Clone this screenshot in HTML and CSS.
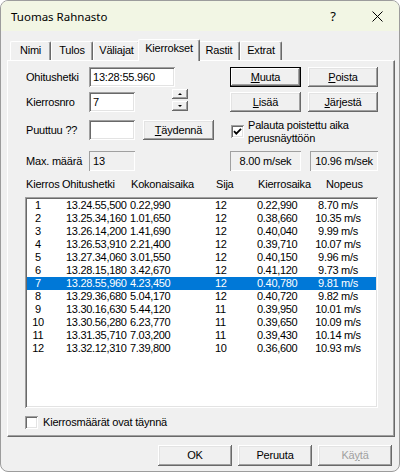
FILE: index.html
```html
<!DOCTYPE html>
<html>
<head>
<meta charset="utf-8">
<link rel="stylesheet" href="styles.css">
</head>
<body>
<div class="window">
  <div class="titlebar">
    <span class="title">Tuomas Rahnasto</span>
    <span class="cap help">?</span>
    <span class="cap close"><svg width="11" height="11" viewBox="0 0 11 11"><path d="M0.5 0.5 L10.5 10.5 M10.5 0.5 L0.5 10.5" stroke="#000" stroke-width="1" fill="none"/></svg></span>
  </div>
  <div class="tabs">
    <div class="tab t-nimi">Nimi</div>
    <div class="tab t-tulos">Tulos</div>
    <div class="tab t-vali">Väliajat</div>
    <div class="tab t-kier sel">Kierrokset</div>
    <div class="tab t-rast">Rastit</div>
    <div class="tab t-extr">Extrat</div>
  </div>
  <div class="panel">
    <div class="row r1">
      <span class="lbl">Ohitushetki</span>
      <div class="cell"><div class="edit w86">13:28:55.960</div></div>
      <div class="cell right"><div class="btn default w71"><u>M</u>uuta</div><div class="btn w70"><u>P</u>oista</div></div>
    </div>
    <div class="row r2">
      <span class="lbl">Kierrosnro</span>
      <div class="cell">
        <div class="edit w46">7</div>
        <div class="spin">
          <div class="sbtn"><span class="arr up"></span></div>
          <div class="sbtn"><span class="arr down"></span></div>
        </div>
      </div>
      <div class="cell right"><div class="btn w71"><u>L</u>isää</div><div class="btn w70"><u>J</u>ärjestä</div></div>
    </div>
    <div class="row r3">
      <span class="lbl">Puuttuu ??</span>
      <div class="cell"><div class="edit w46"></div><div class="btn w71 tayd"><u>T</u>äydennä</div></div>
      <div class="cell right">
        <div class="chkwrap">
          <span class="chk"><svg width="9" height="9" viewBox="0 0 9 9"><path d="M1 4.2 L3.3 6.6 L8 1.8" stroke="#000" stroke-width="1.8" fill="none"/></svg></span>
          <span class="chklbl">Palauta poistettu aika<br>perusnäyttöön</span>
        </div>
      </div>
    </div>
    <div class="row r4">
      <span class="lbl">Max. määrä</span>
      <div class="cell"><div class="static w46">13</div></div>
      <div class="cell right"><div class="static w71 center">8.00 m/sek</div><div class="static w68 center">10.96 m/sek</div></div>
    </div>
    <div class="colhead">
      <span>Kierros</span><span>Ohitushetki</span><span>Kokonaisaika</span><span>Sija</span><span>Kierrosaika</span><span>Nopeus</span>
    </div>
    <div class="list">
      <div class="lrow"><span class="c1">1</span><span class="c2">13.24.55,500</span><span>0.22,990</span><span>12</span><span>0.22,990</span><span class="c6">8.70 m/s</span></div>
      <div class="lrow"><span class="c1">2</span><span class="c2">13.25.34,160</span><span>1.01,650</span><span>12</span><span>0.38,660</span><span class="c6">10.35 m/s</span></div>
      <div class="lrow"><span class="c1">3</span><span class="c2">13.26.14,200</span><span>1.41,690</span><span>12</span><span>0.40,040</span><span class="c6">9.99 m/s</span></div>
      <div class="lrow"><span class="c1">4</span><span class="c2">13.26.53,910</span><span>2.21,400</span><span>12</span><span>0.39,710</span><span class="c6">10.07 m/s</span></div>
      <div class="lrow"><span class="c1">5</span><span class="c2">13.27.34,060</span><span>3.01,550</span><span>12</span><span>0.40,150</span><span class="c6">9.96 m/s</span></div>
      <div class="lrow"><span class="c1">6</span><span class="c2">13.28.15,180</span><span>3.42,670</span><span>12</span><span>0.41,120</span><span class="c6">9.73 m/s</span></div>
      <div class="lrow selrow"><span class="c1">7</span><span class="c2">13.28.55,960</span><span>4.23,450</span><span>12</span><span>0.40,780</span><span class="c6">9.81 m/s</span></div>
      <div class="lrow"><span class="c1">8</span><span class="c2">13.29.36,680</span><span>5.04,170</span><span>12</span><span>0.40,720</span><span class="c6">9.82 m/s</span></div>
      <div class="lrow"><span class="c1">9</span><span class="c2">13.30.16,630</span><span>5.44,120</span><span>11</span><span>0.39,950</span><span class="c6">10.01 m/s</span></div>
      <div class="lrow"><span class="c1">10</span><span class="c2">13.30.56,280</span><span>6.23,770</span><span>11</span><span>0.39,650</span><span class="c6">10.09 m/s</span></div>
      <div class="lrow"><span class="c1">11</span><span class="c2">13.31.35,710</span><span>7.03,200</span><span>11</span><span>0.39,430</span><span class="c6">10.14 m/s</span></div>
      <div class="lrow"><span class="c1">12</span><span class="c2">13.32.12,310</span><span>7.39,800</span><span>10</span><span>0.36,600</span><span class="c6">10.93 m/s</span></div>
    </div>
    <div class="bchk">
      <span class="chk"></span>
      <span>Kierrosmäärät ovat täynnä</span>
    </div>
  </div>
  <div class="footer">
    <div class="btn fbtn">OK</div>
    <div class="btn fbtn">Peruuta</div>
    <div class="btn fbtn disabled">Kä<u>y</u>tä</div>
  </div>
</div>
</body>
</html>
```
FILE: styles.css
```css
* { box-sizing: border-box; }
body {
  margin: 0;
  background: #fff;
  font-family: "Liberation Sans", Arial, sans-serif;
  font-size: 11px;
  letter-spacing: -0.2px;
  color: #000;
}
.window {
  width: 400px;
  height: 472px;
  border: 1px solid #9c9c9c;
  border-radius: 8px;
  background: #f0f0f0;
  overflow: hidden;
}
.titlebar {
  height: 30px;
  background: #f2f6e4;
  display: flex;
  align-items: center;
  padding-left: 10px;
  font-family: "Noto Sans", sans-serif;
  font-size: 11.5px;
  letter-spacing: 0;
}
.title { flex: 1; }
.cap {
  width: 44px;
  height: 30px;
  display: flex;
  align-items: center;
  justify-content: center;
}
.help { font-size: 13px; }
.tabs {
  display: flex;
  align-items: flex-end;
  height: 19px;
  margin-top: 10px;
  padding-left: 9px;
}
.tab {
  height: 19px;
  line-height: 17px;
  text-align: center;
  border-top: 1px solid #fff;
  border-left: 1px solid #fff;
  border-right: 1px solid #696969;
  box-shadow: inset -1px 0 #a0a0a0;
  border-radius: 2px 2px 0 0;
  background: #f0f0f0;
}
.t-nimi { width: 41px; }
.t-tulos { width: 42px; }
.t-vali { width: 47px; }
.t-kier { width: 62px; }
.t-rast { width: 42px; }
.t-extr { width: 42px; }
.tab.sel {
  height: 22px;
  margin: 0 -2px -1px;
  position: relative;
  z-index: 1;
}
.panel {
  margin-left: 6px;
  width: 388px;
  height: 377px;
  border-top: 1px solid #fff;
  border-left: 1px solid #fff;
  border-right: 1px solid #696969;
  border-bottom: 1px solid #696969;
  box-shadow: inset -1px -1px #a0a0a0;
  padding: 6px 0 0 17px;
}
.row {
  display: grid;
  grid-template-columns: 64px 141px 148px;
  height: 20px;
  align-items: center;
}
.r2 { margin-top: 5px; }
.r3 { margin-top: 8px; }
.r4 { margin-top: 11px; }
.lbl { padding-left: 1px; }
.cell {
  display: flex;
  align-items: center;
  height: 20px;
}
.right { gap: 7px; }
.r4 .right { gap: 9px; }
.edit {
  height: 20px;
  background: #fff;
  box-shadow: inset 1px 1px #a0a0a0, inset -1px -1px #fff, inset 2px 2px #696969, inset -2px -2px #e3e3e3;
  padding: 0 4px;
  line-height: 20px;
}
.static {
  height: 20px;
  line-height: 20px;
  padding: 0 4px;
  box-shadow: inset 1px 1px #a0a0a0, inset -1px -1px #fff;
}
.center { text-align: center; padding: 0; }
.w86 { width: 86px; }
.w46 { width: 46px; }
.w71 { width: 71px; }
.w70 { width: 70px; }
.w68 { width: 68px; }
.btn {
  height: 20px;
  line-height: 20px;
  text-align: center;
  background: #f0f0f0;
  box-shadow: inset -1px -1px #696969, inset 1px 1px #fff, inset -2px -2px #a0a0a0, inset 2px 2px #e3e3e3;
}
.btn.default {
  box-shadow: inset 0 0 0 1px #000, inset -2px -2px #696969, inset 2px 2px #fff, inset -3px -3px #a0a0a0;
}
.tayd { margin-left: 8px; }
.spin {
  margin-left: 37px;
  align-self: flex-start;
  margin-top: -3px;
  display: flex;
  flex-direction: column;
  gap: 2px;
}
.sbtn {
  width: 16px;
  height: 10px;
  display: flex;
  align-items: center;
  justify-content: center;
  background: #f0f0f0;
  box-shadow: inset -1px -1px #696969, inset 1px 1px #fff, inset -2px -2px #a0a0a0;
}
.arr {
  width: 0;
  height: 0;
  border-left: 2px solid transparent;
  border-right: 2px solid transparent;
}
.arr.up { border-bottom: 2px solid #000; }
.arr.down { border-top: 2px solid #000; }
.chkwrap {
  display: flex;
  align-items: center;
  gap: 4px;
  margin-left: 1px;
  margin-top: 3px;
}
.chk {
  width: 13px;
  height: 13px;
  flex: none;
  background: #fff;
  box-shadow: inset 1px 1px #a0a0a0, inset -1px -1px #fff, inset 2px 2px #696969, inset -2px -2px #e3e3e3;
  display: flex;
  align-items: center;
  justify-content: center;
}
.chklbl { line-height: 13px; }
.colhead {
  display: grid;
  grid-template-columns: 36px 69px 85px 42px 68px auto;
  margin-top: 7px;
  padding-left: 1px;
  height: 13px;
  line-height: 13px;
}
.list {
  margin-top: 6px;
  width: 353px;
  height: 211px;
  background: #fff;
  padding: 2px;
  box-shadow: inset 1px 1px #a0a0a0, inset -1px -1px #fff, inset 2px 2px #696969, inset -2px -2px #e3e3e3;
}
.lrow {
  display: grid;
  grid-template-columns: 22px 81px 85px 42px 43px 76px;
  height: 13px;
  line-height: 13px;
  letter-spacing: -0.3px;
  white-space: nowrap;
}
.c1, .c6 { text-align: center; }
.c2 { padding-left: 17px; }
.selrow {
  background: #0078d7;
  color: #fff;
}
.bchk {
  display: flex;
  align-items: center;
  gap: 5px;
  margin-top: 8px;
  height: 13px;
  line-height: 13px;
}
.footer {
  display: flex;
  justify-content: flex-end;
  gap: 6px;
  margin-top: 8px;
  padding-right: 7px;
}
.fbtn {
  width: 74px;
  height: 21px;
  line-height: 21px;
}
.disabled { color: #a0a0a0; }
```
